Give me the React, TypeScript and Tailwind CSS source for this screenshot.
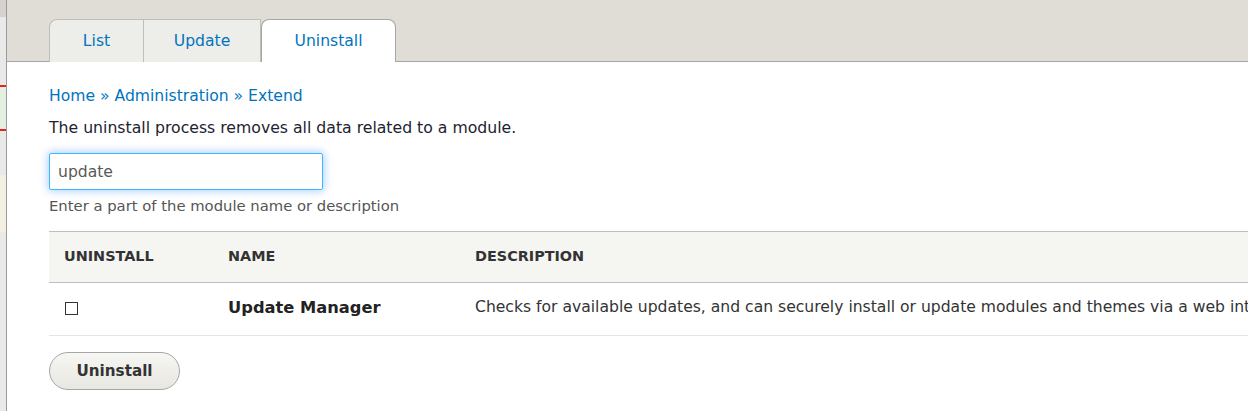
export default function App() {
  const font = { fontFamily: '"DejaVu Sans", Verdana, sans-serif' };
  return (
    <div className="flex h-[411px] w-full overflow-hidden bg-white text-[#222330]" style={font}>
      {/* page behind the panel */}
      <div className="relative w-[7px] shrink-0 bg-[#e9e9e9] border-r border-[#9a9a9a]">
        <div className="absolute left-0 top-0 h-[17px] w-full bg-[#d4d3cd]" />
        <div className="absolute left-0 top-[85px] h-[46px] w-full border-y-2 border-[#e0261a] bg-[#e4efe2]" />
        <div className="absolute left-0 top-[175px] h-[57px] w-full bg-[#f3efe1]" />
      </div>

      <div className="flex-1 min-w-0">
        {/* tabs header */}
        <div className="flex h-[62px] items-end border-b border-[#a6a6a6] bg-[#dfddd5] pl-[42px]">
          <div className="flex h-[43px] -mb-px text-[15.6px] text-[#0074bd]">
            <a className="flex w-[94px] items-center justify-center rounded-tl-[8px] border border-r-0 border-b-0 border-[#bfbfba] bg-[#ededea] pt-[2px]">List</a>
            <a className="flex w-[118px] items-center justify-center border border-b-0 border-[#bfbfba] bg-[#ededea] pt-[2px]">Update</a>
            <a className="flex w-[135px] items-center justify-center rounded-t-[8px] border border-b-0 border-[#a6a6a6] bg-white pt-[2px]">Uninstall</a>
          </div>
        </div>

        <div className="pl-[42px] pt-[24px]">
          <nav className="text-[15.6px] leading-5 text-[#0074bd]">
            <a>Home</a> » <a>Administration</a> » <a>Extend</a>
          </nav>
          <p className="mt-[12px] text-[15.7px] leading-5">The uninstall process removes all data related to a module.</p>

          <input
            readOnly
            value="update"
            className="mt-[15px] block h-[37px] w-[274px] rounded-[2px] border border-[#40b6ff] px-[8px] text-[15.6px] text-[#595959] shadow-[0_0_8px_1px_rgba(0,120,255,0.35)] outline-none"
            style={font}
          />
          <p className="mt-[6px] text-[14.8px] leading-5 text-[#555]">Enter a part of the module name or description</p>

          <table className="mt-[15px] w-[1400px] border-collapse text-left">
            <thead>
              <tr className="h-[51px] border-y border-[#bfbfba] bg-[#f5f5f2] text-[14.4px] font-bold uppercase text-[#333]">
                <th className="w-[179px] pl-[15px]">Uninstall</th>
                <th className="w-[247px]">Name</th>
                <th>Description</th>
              </tr>
            </thead>
            <tbody>
              <tr className="h-[53px] border-b border-[#e6e4df]">
                <td className="pl-[16px] pb-[2px]">
                  <div className="h-[13px] w-[13px] border border-[#333] bg-white" />
                </td>
                <td className="pb-[2px] text-[16.3px] font-bold text-[#222]">Update Manager</td>
                <td className="pb-[2px] whitespace-nowrap text-[15.6px] text-[#333]">
                  Checks for available updates, and can securely install or update modules and themes via a web interface.
                </td>
              </tr>
            </tbody>
          </table>

          <button className="mt-[16px] h-[38px] w-[131px] rounded-full border border-[#a6a6a6] bg-gradient-to-b from-[#f6f6f3] to-[#e8e7e0] text-[15.2px] font-bold text-[#333]">
            Uninstall
          </button>
        </div>
      </div>
    </div>
  );
}
